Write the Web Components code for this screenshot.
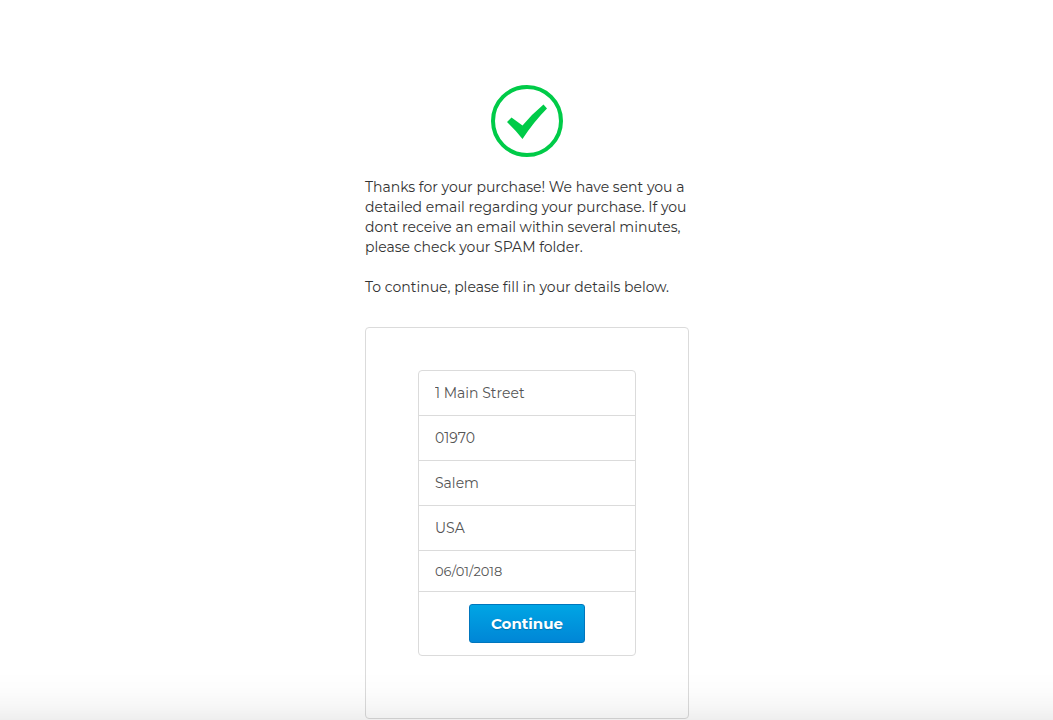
<!DOCTYPE html>
<html lang="en">
<head>
<meta charset="utf-8">
<meta name="viewport" content="width=device-width, initial-scale=1">
<title>Thanks for your purchase</title>
<style>
  body { margin: 0; background: #fff; color: #333; font-family: Montserrat, Inter, sans-serif; }
</style>
</head>
<body>
<thank-you-page>
  <success-mark slot="icon"></success-mark>
  <message-text slot="message">
    <p>Thanks for your purchase! We have sent you a detailed email regarding your purchase. If you dont receive an email within several minutes, please check your SPAM folder.</p>
    <p>To continue, please fill in your details below.</p>
  </message-text>
  <details-card slot="form">
    <detail-field label="Address" value="1 Main Street"></detail-field>
    <detail-field label="Postal code" value="01970"></detail-field>
    <detail-field label="City" value="Salem"></detail-field>
    <detail-field label="Country" value="USA"></detail-field>
    <detail-field label="Date" value="06/01/2018" compact></detail-field>
    <submit-button slot="action">Continue</submit-button>
  </details-card>
</thank-you-page>
<script>
const define = (name, html, setup) => {
  const template = document.createElement('template');
  template.innerHTML = html;
  customElements.define(name, class extends HTMLElement {
    constructor() {
      super();
      this.attachShadow({ mode: 'open' }).append(template.content.cloneNode(true));
      if (setup) setup(this, this.shadowRoot);
    }
  });
};

define('thank-you-page', `
  <style>
    :host { display: block; }
    main { box-sizing: border-box; max-width: 325px; margin: 0 auto; padding: 85px 0 1px 1px; display: flex; flex-direction: column; }
    slot[name=message]::slotted(*) { margin: 20px 0 30px; }
    .fade { position: fixed; left: 0; right: 0; bottom: 0; height: 48px; pointer-events: none;
      background: linear-gradient(rgba(0,0,0,0), rgba(0,0,0,.01) 40%, rgba(0,0,0,.03) 70%, rgba(0,0,0,.065)); }
  </style>
  <main>
    <slot name="icon"></slot>
    <slot name="message"></slot>
    <slot name="form"></slot>
  </main>
  <div class="fade"></div>`);

define('success-mark', `
  <style>:host { display: flex; justify-content: center; } svg { display: block; }</style>
  <svg width="72" height="72" viewBox="0 0 72 72" role="img" aria-label="Success">
    <circle cx="36" cy="36" r="34" fill="none" stroke="#00cb48" stroke-width="4"/>
    <path fill="#00cb48" d="M16 37 20.5 32.5 31.5 40.5Q41 29 52.5 19.5L56 23.5Q43 36.5 31.5 54Q24 44.5 16 37Z"/>
  </svg>`);

define('message-text', `
  <style>
    :host { display: flex; flex-direction: column; gap: 20px; font-size: 14px; line-height: 20px; }
    ::slotted(p) { margin: 0; }
  </style>
  <slot></slot>`);

define('details-card', `
  <style>
    :host { display: block; box-sizing: border-box; border: 1px solid #dbdbdb; border-radius: 4px; padding: 42px 52px 62px; }
    form { border: 1px solid #dbdbdb; border-radius: 4px; overflow: hidden; }
    .action { display: flex; justify-content: center; padding: 12px 0; }
  </style>
  <form>
    <slot></slot>
    <div class="action"><slot name="action"></slot></div>
  </form>`);

define('detail-field', `
  <style>
    :host { display: block; border-bottom: 1px solid #dbdbdb; }
    input { display: block; box-sizing: border-box; width: 100%; height: 44px; border: 0; margin: 0; padding: 0 16px;
      background: transparent; color: #555; font-family: inherit; font-size: 14px; outline-offset: -2px; }
    :host([compact]) input { height: 40px; font-size: 13px; }
  </style>
  <input type="text">`, (host, root) => {
    const input = root.querySelector('input');
    input.value = host.getAttribute('value');
    input.setAttribute('aria-label', host.getAttribute('label'));
  });

define('submit-button', `
  <style>
    :host { display: block; }
    button { display: block; box-sizing: border-box; min-width: 116px; height: 39px; margin: 0; padding: 0 20px; border: 1px solid #0076bd;
      border-radius: 3px; background: linear-gradient(#00a5e4, #0086d6); color: #fff; font-family: inherit; font-size: 15px;
      font-weight: 700; text-shadow: 0 1px 1px rgba(0,0,0,.2); cursor: pointer; }
  </style>
  <button type="button"><slot></slot></button>`);
</script>
</body>
</html>
